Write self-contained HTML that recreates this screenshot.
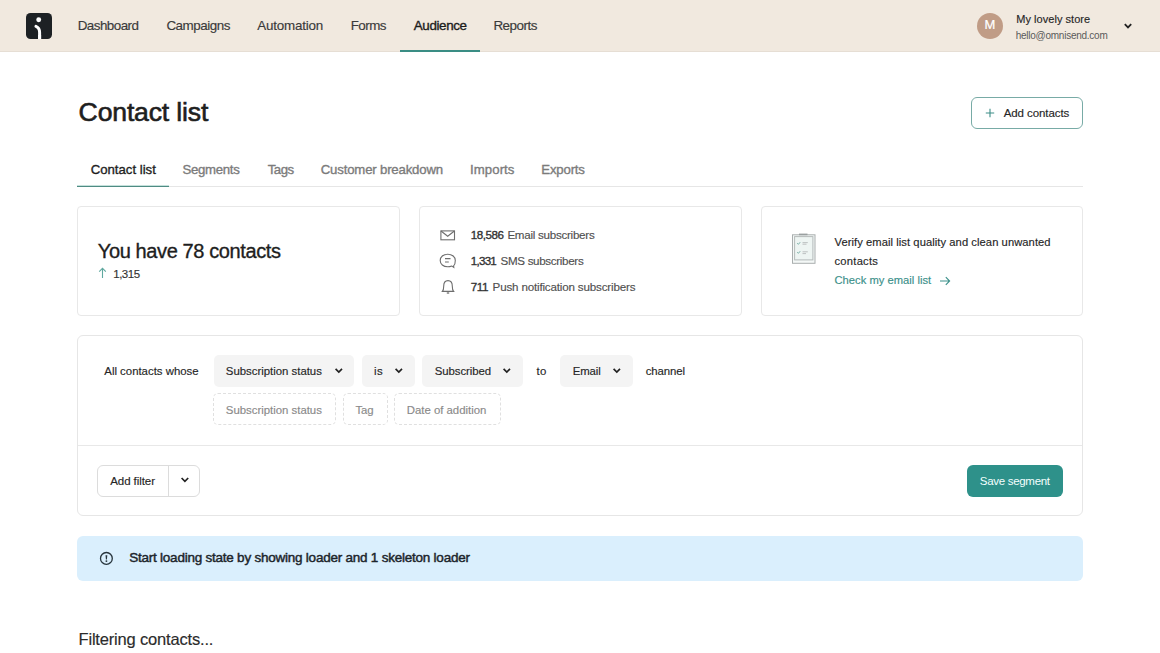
<!DOCTYPE html>
<html><head><meta charset="utf-8"><style>
html,body{margin:0;padding:0;}
body{width:1160px;height:653px;overflow:hidden;background:#fff;position:relative;font-family:"Liberation Sans",sans-serif;}
.box{position:absolute;box-sizing:content-box;}
.t{position:absolute;white-space:nowrap;}
</style></head><body>
<div class="box" style="left:0;top:0;width:1160px;height:51px;background:#f1e9df;border-bottom:1px solid #e6ded4;"></div>
<svg class="box" style="left:26px;top:13px" width="26" height="26" viewBox="0 0 26 26">
<rect x="0" y="0" width="26" height="26" rx="4.5" fill="#1d2124"/>
<circle cx="12.7" cy="6.8" r="2.45" fill="#fff"/>
<path d="M10 13.4 C12.6 14.4 13.6 16.6 13.6 19.5 L13.6 26" stroke="#fff" stroke-width="3" stroke-linecap="round" fill="none"/><rect x="12.1" y="22" width="3" height="4" fill="#fff"/>
</svg>
<div class="t" style="left:77.70px;top:17.75px;font-size:13.4px;line-height:16px;letter-spacing:-0.525px;color:#3a3a3a;-webkit-text-stroke:0.15px currentColor;">Dashboard</div>
<div class="t" style="left:166.40px;top:17.75px;font-size:13.4px;line-height:16px;letter-spacing:-0.456px;color:#3a3a3a;-webkit-text-stroke:0.15px currentColor;">Campaigns</div>
<div class="t" style="left:257.20px;top:17.75px;font-size:13.4px;line-height:16px;letter-spacing:-0.183px;color:#3a3a3a;-webkit-text-stroke:0.15px currentColor;">Automation</div>
<div class="t" style="left:350.70px;top:17.75px;font-size:13.4px;line-height:16px;letter-spacing:-0.525px;color:#3a3a3a;-webkit-text-stroke:0.15px currentColor;">Forms</div>
<div class="t" style="left:413.80px;top:17.75px;font-size:13.4px;line-height:16px;letter-spacing:-0.382px;color:#1c1c1c;-webkit-text-stroke:0.35px currentColor;">Audience</div>
<div class="t" style="left:493.40px;top:17.75px;font-size:13.4px;line-height:16px;letter-spacing:-0.479px;color:#3a3a3a;-webkit-text-stroke:0.15px currentColor;">Reports</div>
<div class="box" style="left:400px;top:50px;width:80px;height:2px;background:#3a8d84;"></div>
<div class="box" style="left:977px;top:12.5px;width:26px;height:26px;border-radius:50%;background:#c09c86;"></div>
<div class="t" style="left:984.60px;top:17.29px;font-size:13px;line-height:16px;letter-spacing:0.000px;color:#ffffff;-webkit-text-stroke:0.15px currentColor;-webkit-text-stroke:0.2px #fff;">M</div>
<div class="t" style="left:1016.20px;top:12.89px;font-size:11px;line-height:13px;letter-spacing:0.045px;color:#262626;-webkit-text-stroke:0.15px currentColor;">My lovely store</div>
<div class="t" style="left:1015.70px;top:29.73px;font-size:10px;line-height:12px;letter-spacing:-0.251px;color:#5a5a5a;-webkit-text-stroke:0.15px currentColor;-webkit-text-stroke:0;">hello@omnisend.com</div>
<svg class="box" style="left:1123px;top:22px" width="10" height="8" viewBox="0 0 10 8">
<path d="M1.8 2.2 L5 5.4 L8.2 2.2" stroke="#222" stroke-width="1.8" fill="none"/></svg>
<div class="t" style="left:78.60px;top:95.98px;font-size:26.6px;line-height:32px;letter-spacing:-0.166px;color:#1e2020;-webkit-text-stroke:0.35px currentColor;-webkit-text-stroke:0.6px currentColor;">Contact list</div>
<div class="box" style="left:971px;top:97px;width:110px;height:30px;border:1px solid #78aba6;border-radius:6px;background:#fff;"></div>
<svg class="box" style="left:985px;top:108px" width="10" height="10" viewBox="0 0 10 10">
<path d="M5 0.8 V9.2 M0.8 5 H9.2" stroke="#3d8d87" stroke-width="1.1" fill="none"/></svg>
<div class="t" style="left:1003.70px;top:106.01px;font-size:11.5px;line-height:14px;letter-spacing:-0.082px;color:#262626;-webkit-text-stroke:0.15px currentColor;">Add contacts</div>
<div class="box" style="left:77px;top:186px;width:1006px;height:1px;background:#e6e6e6;"></div>
<div class="box" style="left:77px;top:185px;width:92px;height:1px;background:#c4e0db;"></div>
<div class="box" style="left:77px;top:186px;width:92px;height:1px;background:#4f8b83;"></div>
<div class="t" style="left:90.70px;top:161.82px;font-size:13.2px;line-height:16px;letter-spacing:-0.005px;color:#1e1e1e;-webkit-text-stroke:0.35px currentColor;">Contact list</div>
<div class="t" style="left:182.40px;top:161.82px;font-size:13.2px;line-height:16px;letter-spacing:-0.282px;color:#7b7b7b;-webkit-text-stroke:0.35px currentColor;">Segments</div>
<div class="t" style="left:267.70px;top:161.82px;font-size:13.2px;line-height:16px;letter-spacing:-0.458px;color:#7b7b7b;-webkit-text-stroke:0.35px currentColor;">Tags</div>
<div class="t" style="left:320.75px;top:161.82px;font-size:13.2px;line-height:16px;letter-spacing:-0.176px;color:#7b7b7b;-webkit-text-stroke:0.35px currentColor;">Customer breakdown</div>
<div class="t" style="left:470.00px;top:161.82px;font-size:13.2px;line-height:16px;letter-spacing:0.083px;color:#7b7b7b;-webkit-text-stroke:0.35px currentColor;">Imports</div>
<div class="t" style="left:541.25px;top:161.82px;font-size:13.2px;line-height:16px;letter-spacing:-0.167px;color:#7b7b7b;-webkit-text-stroke:0.35px currentColor;">Exports</div>
<div class="box" style="left:77px;top:206px;width:321px;height:108px;border:1px solid #e8e8e8;border-radius:4px;"></div>
<div class="box" style="left:419px;top:206px;width:321px;height:108px;border:1px solid #e8e8e8;border-radius:4px;"></div>
<div class="box" style="left:761px;top:206px;width:320px;height:108px;border:1px solid #e8e8e8;border-radius:4px;"></div>
<div class="t" style="left:97.80px;top:238.67px;font-size:20px;line-height:24px;letter-spacing:-0.384px;color:#1e1e1e;-webkit-text-stroke:0.35px currentColor;">You have 78 contacts</div>
<svg class="box" style="left:98px;top:267px" width="9" height="12" viewBox="0 0 9 12">
<path d="M4.5 11 V1.5 M1.2 4.6 L4.5 1.3 L7.8 4.6" stroke="#5fa89f" stroke-width="1.1" fill="none"/></svg>
<div class="t" style="left:113.30px;top:267.01px;font-size:11.5px;line-height:14px;letter-spacing:-0.512px;color:#333333;-webkit-text-stroke:0.15px currentColor;">1,315</div>
<svg class="box" style="left:440px;top:230px" width="16" height="11" viewBox="0 0 16 11">
<rect x="0.9" y="0.9" width="13.6" height="8.9" fill="none" stroke="#6e6e6e" stroke-width="1.1"/>
<path d="M1 1 L7.7 6.2 L14.4 1" stroke="#6e6e6e" stroke-width="1.1" fill="none"/></svg>
<svg class="box" style="left:439px;top:253px" width="18" height="16" viewBox="0 0 18 16">
<path d="M14.6 12.9 C16.1 11.6 16.3 10 16.3 7.5 C16.3 3.8 13.2 1.2 8.7 1.2 C4.3 1.2 1.2 3.8 1.2 7.5 C1.2 11.2 4.3 13.8 8.7 13.8 C10.2 13.8 11.6 13.5 12.8 13 L14.8 14.4 Z" fill="none" stroke="#6e6e6e" stroke-width="1.1"/>
<path d="M6 5.6 H11.5 M6 9 H9.8" stroke="#6e6e6e" stroke-width="1.1"/></svg>
<svg class="box" style="left:440px;top:279px" width="16" height="16" viewBox="0 0 16 16">
<path d="M2.4 12.4 C3.5 11.2 3.7 10 3.7 7.2 C3.7 3.6 5.4 1.6 8 1.6 C10.6 1.6 12.3 3.6 12.3 7.2 C12.3 10 12.5 11.2 13.6 12.4 Z" fill="none" stroke="#6e6e6e" stroke-width="1.1"/>
<path d="M6.8 14 H9.2" stroke="#6e6e6e" stroke-width="1.3"/></svg>
<div class="t" style="left:470.80px;top:228.28px;font-size:11.6px;line-height:14px;letter-spacing:-0.460px;color:#333333;-webkit-text-stroke:0.35px currentColor;">18,586</div>
<div class="t" style="left:507.40px;top:228.28px;font-size:11.6px;line-height:14px;letter-spacing:-0.262px;color:#505050;-webkit-text-stroke:0.15px currentColor;">Email subscribers</div>
<div class="t" style="left:470.80px;top:253.98px;font-size:11.6px;line-height:14px;letter-spacing:-0.750px;color:#333333;-webkit-text-stroke:0.35px currentColor;">1,331</div>
<div class="t" style="left:500.60px;top:253.98px;font-size:11.6px;line-height:14px;letter-spacing:-0.323px;color:#505050;-webkit-text-stroke:0.15px currentColor;">SMS subscribers</div>
<div class="t" style="left:470.80px;top:279.58px;font-size:11.6px;line-height:14px;letter-spacing:-0.450px;color:#333333;-webkit-text-stroke:0.35px currentColor;">711</div>
<div class="t" style="left:492.60px;top:279.58px;font-size:11.6px;line-height:14px;letter-spacing:-0.169px;color:#505050;-webkit-text-stroke:0.15px currentColor;">Push notification subscribers</div>
<svg class="box" style="left:791px;top:233px" width="26" height="32" viewBox="0 0 26 32">
<rect x="1.5" y="1.8" width="22.5" height="28.5" fill="#f4f8f7" stroke="#a9aeae" stroke-width="1"/>
<rect x="3.6" y="3.6" width="18.3" height="23.3" fill="#eef5f3" stroke="#b5baba" stroke-width="1"/>
<path d="M8 1.4 H16.5" stroke="#9aa0a0" stroke-width="1.6"/>
<path d="M6.2 10.2 L7.4 11.3 L9.2 9.2 M6.2 19.2 L7.4 20.3 L9.2 18.2" stroke="#6fa89f" stroke-width="0.9" fill="none"/>
<path d="M11.5 9.6 H16.8 M11.5 11.2 H15.5 M11.5 18.8 H16.8 M11.5 20.6 H15" stroke="#b8bcbc" stroke-width="0.9"/>
</svg>
<div class="t" style="left:834.50px;top:236.32px;font-size:11.2px;line-height:13px;letter-spacing:0.064px;color:#262626;-webkit-text-stroke:0.15px currentColor;">Verify email list quality and clean unwanted</div>
<div class="t" style="left:834.50px;top:255.12px;font-size:11.2px;line-height:13px;letter-spacing:0.250px;color:#262626;-webkit-text-stroke:0.15px currentColor;">contacts</div>
<div class="t" style="left:834.50px;top:274.47px;font-size:11.2px;line-height:13px;letter-spacing:0.014px;color:#3b908a;-webkit-text-stroke:0.15px currentColor;">Check my email list</div>
<svg class="box" style="left:939px;top:276px" width="12" height="10" viewBox="0 0 12 10">
<path d="M1 5 H10.6 M6.8 1.2 L10.6 5 L6.8 8.8" stroke="#3b908a" stroke-width="1.1" fill="none"/></svg>
<div class="box" style="left:77px;top:335px;width:1004px;height:179px;border:1px solid #e6e6e6;border-radius:6px;"></div>
<div class="box" style="left:78px;top:445px;width:1004px;height:1px;background:#e8e8e8;"></div>
<div class="t" style="left:104.30px;top:363.85px;font-size:11.4px;line-height:14px;letter-spacing:-0.004px;color:#262626;-webkit-text-stroke:0.15px currentColor;">All contacts whose</div>
<div class="box" style="left:213.7px;top:355px;width:140.3px;height:32px;background:#f4f4f4;border-radius:5px;"></div>
<div class="t" style="left:225.80px;top:363.85px;font-size:11.4px;line-height:14px;letter-spacing:-0.008px;color:#262626;-webkit-text-stroke:0.15px currentColor;">Subscription status</div>
<svg class="box" style="left:334.40px;top:367px" width="10" height="8" viewBox="0 0 10 8">
<path d="M1.6 1.9 L4.8 5.1 L8 1.9" stroke="#222" stroke-width="1.7" fill="none"/></svg>
<div class="box" style="left:362.3px;top:355px;width:52.80000000000001px;height:32px;background:#f4f4f4;border-radius:5px;"></div>
<div class="t" style="left:374.00px;top:363.85px;font-size:11.4px;line-height:14px;letter-spacing:0.550px;color:#262626;-webkit-text-stroke:0.15px currentColor;">is</div>
<svg class="box" style="left:394.40px;top:367px" width="10" height="8" viewBox="0 0 10 8">
<path d="M1.6 1.9 L4.8 5.1 L8 1.9" stroke="#222" stroke-width="1.7" fill="none"/></svg>
<div class="box" style="left:422.2px;top:355px;width:100.90000000000003px;height:32px;background:#f4f4f4;border-radius:5px;"></div>
<div class="t" style="left:434.70px;top:363.85px;font-size:11.4px;line-height:14px;letter-spacing:-0.067px;color:#262626;-webkit-text-stroke:0.15px currentColor;">Subscribed</div>
<svg class="box" style="left:502.10px;top:367px" width="10" height="8" viewBox="0 0 10 8">
<path d="M1.6 1.9 L4.8 5.1 L8 1.9" stroke="#222" stroke-width="1.7" fill="none"/></svg>
<div class="t" style="left:536.50px;top:363.85px;font-size:11.4px;line-height:14px;letter-spacing:0.400px;color:#262626;-webkit-text-stroke:0.15px currentColor;">to</div>
<div class="box" style="left:560.4px;top:355px;width:72.30000000000007px;height:32px;background:#f4f4f4;border-radius:5px;"></div>
<div class="t" style="left:572.80px;top:363.85px;font-size:11.4px;line-height:14px;letter-spacing:-0.150px;color:#262626;-webkit-text-stroke:0.15px currentColor;">Email</div>
<svg class="box" style="left:611.60px;top:367px" width="10" height="8" viewBox="0 0 10 8">
<path d="M1.6 1.9 L4.8 5.1 L8 1.9" stroke="#222" stroke-width="1.7" fill="none"/></svg>
<div class="t" style="left:645.70px;top:363.85px;font-size:11.4px;line-height:14px;letter-spacing:-0.079px;color:#262626;-webkit-text-stroke:0.15px currentColor;">channel</div>
<div class="box" style="left:212.5px;top:393px;width:121.5px;height:30px;border:1px dashed #e0e0e0;border-radius:5px;"></div>
<div class="t" style="left:225.80px;top:402.85px;font-size:11.4px;line-height:14px;letter-spacing:-0.008px;color:#8a8a8a;-webkit-text-stroke:0.15px currentColor;">Subscription status</div>
<div class="box" style="left:342.5px;top:393px;width:43.0px;height:30px;border:1px dashed #e0e0e0;border-radius:5px;"></div>
<div class="t" style="left:355.50px;top:402.85px;font-size:11.4px;line-height:14px;letter-spacing:-0.188px;color:#8a8a8a;-webkit-text-stroke:0.15px currentColor;">Tag</div>
<div class="box" style="left:394.3px;top:393px;width:104.5px;height:30px;border:1px dashed #e0e0e0;border-radius:5px;"></div>
<div class="t" style="left:406.70px;top:402.85px;font-size:11.4px;line-height:14px;letter-spacing:-0.005px;color:#8a8a8a;-webkit-text-stroke:0.15px currentColor;">Date of addition</div>
<div class="box" style="left:97px;top:465px;width:101px;height:30px;border:1px solid #dcdcdc;border-radius:6px;"></div>
<div class="box" style="left:168px;top:466px;width:1px;height:30px;background:#dcdcdc;"></div>
<div class="t" style="left:110.20px;top:474.01px;font-size:11.5px;line-height:14px;letter-spacing:-0.064px;color:#262626;-webkit-text-stroke:0.15px currentColor;">Add filter</div>
<svg class="box" style="left:179.5px;top:476px" width="10" height="8" viewBox="0 0 10 8">
<path d="M1.6 2 L4.9 5.3 L8.2 2" stroke="#222" stroke-width="1.7" fill="none"/></svg>
<div class="box" style="left:967px;top:465px;width:96px;height:32px;background:#2e918a;border-radius:6px;"></div>
<div class="t" style="left:979.80px;top:474.01px;font-size:11.5px;line-height:14px;letter-spacing:-0.300px;color:#f4fffe;-webkit-text-stroke:0.15px currentColor;-webkit-text-stroke:0;">Save segment</div>
<div class="box" style="left:77px;top:536px;width:1006px;height:45px;background:#daeffd;border-radius:6px;"></div>
<svg class="box" style="left:99px;top:551px" width="15" height="15" viewBox="0 0 15 15">
<circle cx="7.4" cy="7.4" r="5.9" fill="none" stroke="#26333b" stroke-width="1.3"/>
<path d="M6.5 4.2 H8.3 L7.9 8.6 H6.9 Z" fill="#26333b"/><circle cx="7.4" cy="10.1" r="0.95" fill="#26333b"/></svg>
<div class="t" style="left:129.20px;top:550.02px;font-size:13.5px;line-height:16px;letter-spacing:-0.232px;color:#1c252b;-webkit-text-stroke:0.35px currentColor;-webkit-text-stroke:0.45px currentColor;">Start loading state by showing loader and 1 skeleton loader</div>
<div class="t" style="left:78.50px;top:628.98px;font-size:16.5px;line-height:20px;letter-spacing:-0.180px;color:#2b2b2b;-webkit-text-stroke:0.15px currentColor;">Filtering contacts...</div>
</body></html>
